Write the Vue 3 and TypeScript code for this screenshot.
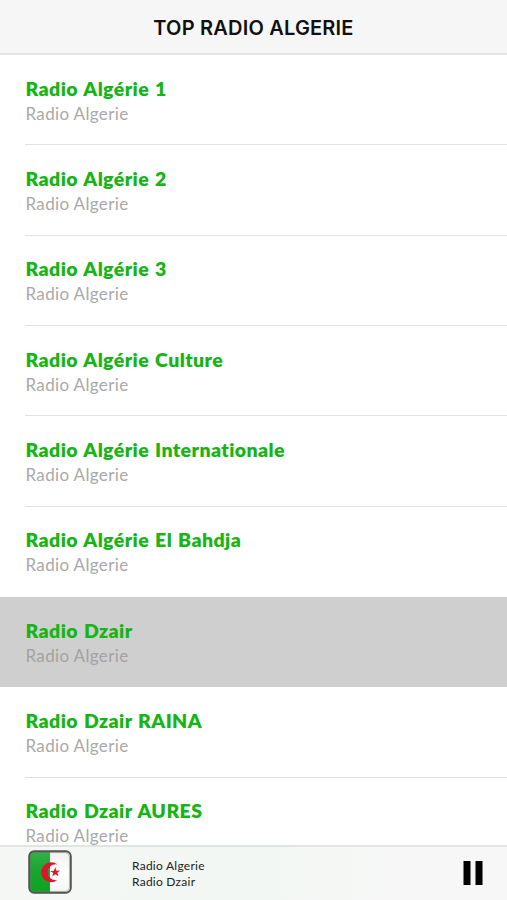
<script setup lang="ts">
interface Station {
  name: string
  group: string
  selected?: boolean
}

const group = 'Radio Algerie'
const stations: Station[] = [
  { name: 'Radio Algérie 1', group },
  { name: 'Radio Algérie 2', group },
  { name: 'Radio Algérie 3', group },
  { name: 'Radio Algérie Culture', group },
  { name: 'Radio Algérie Internationale', group },
  { name: 'Radio Algérie El Bahdja', group },
  { name: 'Radio Dzair', group, selected: true },
  { name: 'Radio Dzair RAINA', group },
  { name: 'Radio Dzair AURES', group },
]
</script>

<template>
  <div class="screen">
    <header class="navbar"><h1>TOP RADIO ALGERIE</h1></header>
    <main class="list">
      <div v-for="s in stations" :key="s.name" class="row" :class="{ selected: s.selected }">
        <div class="cell">
          <div class="name">{{ s.name }}</div>
          <div class="group">{{ s.group }}</div>
        </div>
      </div>
    </main>
    <footer class="player">
      <svg class="flag" viewBox="0 0 46 46" aria-hidden="true">
        <defs>
          <clipPath id="flagShape"><rect x="2" y="2" width="42" height="42" rx="5" /></clipPath>
          <linearGradient id="green" x1="0" y1="0" x2="0" y2="1">
            <stop offset="0" stop-color="#35b548" />
            <stop offset="0.5" stop-color="#17a52c" />
            <stop offset="1" stop-color="#0ca51f" />
          </linearGradient>
          <linearGradient id="white" x1="0" y1="0" x2="0" y2="1">
            <stop offset="0" stop-color="#eeeeee" />
            <stop offset="0.5" stop-color="#ffffff" />
            <stop offset="1" stop-color="#f3f3f3" />
          </linearGradient>
        </defs>
        <g clip-path="url(#flagShape)">
          <rect width="23" height="46" fill="url(#green)" />
          <rect x="23" width="23" height="46" fill="url(#white)" />
        </g>
        <path d="M30.4 15.4A10 10 0 1 0 30.4 31A8 8 0 1 1 30.4 15.4Z" fill="#e0132f" />
        <path d="M28.2 18.300L29.400 21.700L33.100 21.500L30.300 23.700L31.400 27.200L28.300 25.200L25.300 27.400L26.300 23.800L23 22.300L26.900 21.800Z" fill="#e0132f" />
        <rect x="2.2" y="2.2" width="41.6" height="41.6" rx="5" fill="none" stroke="#505551" stroke-width="1.9" />
        <rect x="3.6" y="3.6" width="38.8" height="38.8" rx="4" fill="none" stroke="#777d78" stroke-opacity="0.45" />
      </svg>
      <div class="now">
        <div>Radio Algerie</div>
        <div>Radio Dzair</div>
      </div>
      <svg class="pause" viewBox="0 0 20 24" role="img" aria-label="Pause">
        <rect x="0.5" width="7" height="24" />
        <rect x="12.5" width="7" height="24" />
      </svg>
    </footer>
  </div>
</template>

<style>
body {
  margin: 0;
  overflow: hidden;
}
</style>

<style scoped>
.screen {
  display: flex;
  flex-direction: column;
  width: 507px;
  height: 900px;
  overflow: hidden;
  background: #fff;
  font-family: Lato, "Open Sans", sans-serif;
}
.navbar {
  box-sizing: border-box;
  flex: none;
  height: 55px;
  display: flex;
  justify-content: center;
  background: #f6f6f6;
  border-bottom: 2px solid #e4e4e4;
}
h1 {
  margin: 0;
  padding-top: 1px;
  font: 600 20px/54px Inter, sans-serif;
  letter-spacing: 0.2px;
  color: #111;
  white-space: nowrap;
}
.list {
  flex: 1;
  min-height: 0;
  overflow: hidden;
}
.row {
  height: 90.35px;
  padding-left: 25px;
}
.cell {
  box-sizing: border-box;
  height: 100%;
  padding-top: 20.6px;
  border-bottom: 1px solid #e2e2e2;
}
.row.selected {
  background: #cfcfcf;
}
.selected .cell {
  border-color: #cfcfcf;
}
.row:has(+ .selected) .cell {
  border-color: transparent;
}
.name {
  padding-left: 0.5px;
  font-size: 19.5px;
  line-height: 25px;
  font-weight: 800;
  letter-spacing: 0.42px;
  word-spacing: 1px;
  color: #16b414;
  white-space: nowrap;
}
.group {
  padding-left: 0.5px;
  font-size: 17px;
  line-height: 26.4px;
  letter-spacing: 0.35px;
  color: #a9a9a9;
}
.selected .group {
  color: #a2a2a2;
}
.player {
  box-sizing: border-box;
  flex: none;
  height: 55px;
  display: flex;
  align-items: flex-start;
  padding-left: 27px;
  border-top: 2px solid #e2e4e2;
  background: linear-gradient(90deg, #f5f7f5 0%, #f2f7f3 45%, #f7f7f7 85%);
}
.flag {
  width: 46px;
  height: 46px;
  margin-top: 2px;
}
.now {
  flex: 1;
  padding: 11px 0 0 59px;
  font-size: 12px;
  line-height: 16px;
  letter-spacing: 0.25px;
  color: #222;
}
.pause {
  width: 20px;
  height: 24px;
  margin: 14px 24px 0 0;
}
</style>
